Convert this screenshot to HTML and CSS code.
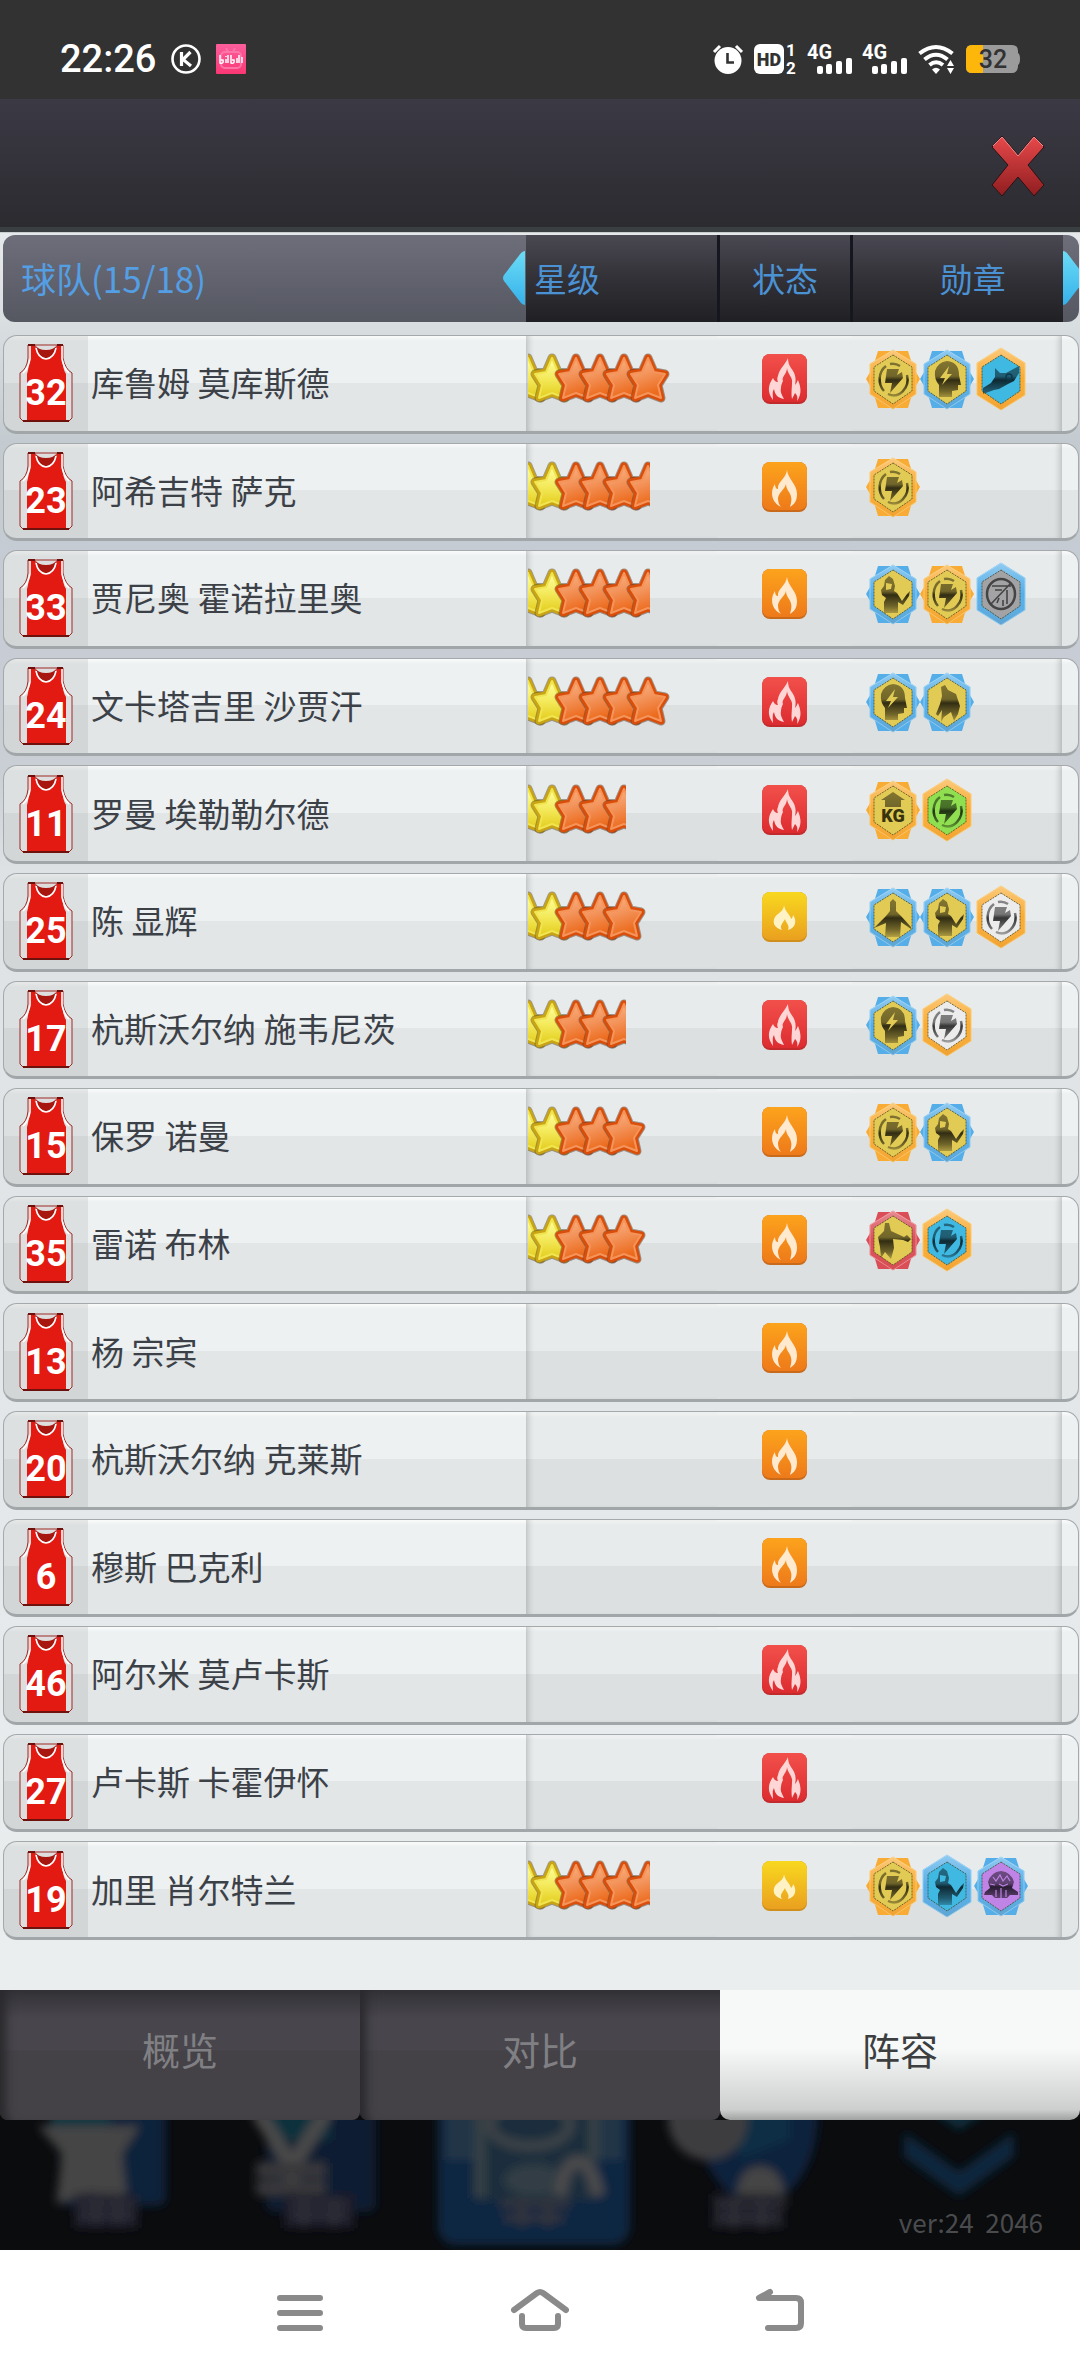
FILE: index.html
```html
<!DOCTYPE html>
<html lang="zh-CN">
<head>
    <meta charset="UTF-8">
    <meta name="viewport" content="width=device-width, initial-scale=1.0">
    <title>阵容</title>
    <link rel="stylesheet" href="styles.css">
</head>
<body>
    <!-- shared shapes -->
    <svg class="defs" aria-hidden="true">
        <defs>
            <linearGradient id="gold-star" x1="0" y1="0" x2="0" y2="1">
                <stop offset="0" stop-color="#ffffa4"/>
                <stop offset="0.5" stop-color="#f4ea5c"/>
                <stop offset="1" stop-color="#e3cc1c"/>
            </linearGradient>
            <linearGradient id="orange-star" x1="0" y1="0" x2="0.3" y2="1">
                <stop offset="0" stop-color="#f8ba90"/>
                <stop offset="0.5" stop-color="#f3935a"/>
                <stop offset="1" stop-color="#ec6a1c"/>
            </linearGradient>
            <linearGradient id="red-tile" x1="0" y1="0" x2="0" y2="1">
                <stop offset="0" stop-color="#f2504b"/>
                <stop offset="1" stop-color="#dd2c30"/>
            </linearGradient>
            <linearGradient id="orange-tile" x1="0" y1="0" x2="0" y2="1">
                <stop offset="0" stop-color="#fca31c"/>
                <stop offset="1" stop-color="#ee7a1a"/>
            </linearGradient>
            <linearGradient id="yellow-tile" x1="0" y1="0" x2="0" y2="1">
                <stop offset="0" stop-color="#f8d81f"/>
                <stop offset="1" stop-color="#eaa01f"/>
            </linearGradient>
            <linearGradient id="shine" x1="0" y1="0" x2="0" y2="1">
                <stop offset="0" stop-color="#fff" stop-opacity="0.35"/>
                <stop offset="0.5" stop-color="#fff" stop-opacity="0"/>
                <stop offset="1" stop-color="#a04000" stop-opacity="0.1"/>
            </linearGradient>
            <linearGradient id="ink" gradientUnits="userSpaceOnUse" x1="0" y1="14" x2="0" y2="52">
                <stop offset="0" stop-opacity="0.42"/>
                <stop offset="0.4" stop-opacity="0.5"/>
                <stop offset="0.5" stop-opacity="0.78"/>
                <stop offset="0.8" stop-opacity="0.5"/>
                <stop offset="1" stop-opacity="0.2"/>
            </linearGradient>
            <linearGradient id="cross-red" x1="0" y1="0" x2="0" y2="1">
                <stop offset="0" stop-color="#e8494b"/>
                <stop offset="1" stop-color="#8f1d1f"/>
            </linearGradient>
            <linearGradient id="arrow-blue" x1="0" y1="0" x2="0" y2="1">
                <stop offset="0" stop-color="#6cdcf6"/>
                <stop offset="1" stop-color="#35b1ea"/>
            </linearGradient>
            <linearGradient id="pink" x1="0" y1="0" x2="0" y2="1">
                <stop offset="0" stop-color="#fb5f9c"/>
                <stop offset="1" stop-color="#fb3775"/>
            </linearGradient>
            <filter id="soft" x="-10%" y="-10%" width="120%" height="120%"><feGaussianBlur stdDeviation="5"/></filter>
            <path id="star" d="M0 6 L6 20 L17 22 L10 33 L13 46 L0 41 L-13 46 L-10 33 L-17 22 L-6 20Z" stroke-linejoin="round"/>
            <g id="star-y">
                <use href="#star" fill="#6a5a20" stroke="#5a4a20" stroke-opacity="0.5" stroke-width="9"/>
                <use href="#star" fill="url(#gold-star)" stroke="#c9a414" stroke-width="7"/>
                <use href="#star" fill="url(#gold-star)" stroke="#f0e450" stroke-width="2"/>
            </g>
            <g id="star-o">
                <use href="#star" fill="#6a3a20" stroke="#5a3a28" stroke-opacity="0.5" stroke-width="9"/>
                <use href="#star" fill="url(#orange-star)" stroke="#d94e0a" stroke-width="7"/>
                <use href="#star" fill="url(#orange-star)" stroke="#f4945a" stroke-width="2"/>
            </g>
        </defs>

        <symbol id="stars5" overflow="visible">
            <use href="#star-y"/><use href="#star-y" x="24"/><use href="#star-o" x="48"/><use href="#star-o" x="72"/><use href="#star-o" x="96"/>
        </symbol>
        <symbol id="stars6" overflow="visible">
            <use href="#stars5"/><use href="#star-o" x="120"/>
        </symbol>

        <symbol id="jersey" viewBox="0 0 54 78">
            <path d="M9 1H44V14Q46 25 53 29V74L50 77H4L1 74V29Q8 25 9 14Z" fill="#dedede" stroke="#9d2a25" stroke-width="1"/>
            <path d="M10 1H16Q18 14 27 14Q36 14 38 1H44V14Q43 24 47 30V77H8V30Q10 24 10 14Z" fill="#e31a12"/>
            <path d="M16 1Q19 6 27 6Q35 6 38 1Q36 14 27 15Q18 14 16 1Z" fill="#a81610"/>
            <path d="M17 4Q19 14 27 15Q35 14 37 4M11 2V15Q9 25 4 29M43 2V15Q45 25 50 29" fill="none" stroke="#fff" stroke-width="1.6"/>
            <path d="M9 1H16M38 1H44M4 77H50" stroke="#6e110c" stroke-width="2"/>
        </symbol>

        <symbol id="fire-red" viewBox="0 0 45 50">
            <rect width="45" height="50" rx="8" fill="#c22a2c"/>
            <rect width="45" height="48" rx="8" fill="url(#red-tile)"/>
            <path d="M26 4C23 11 17 15 16 22C15 24 15 26 16 28C13 28 12 26 11 24C6 31 5 38 11 46C11 41 10 38 12 35C13 41 16 44 22 45C20 41 18 38 19 34C19 31 20 29 21 27C19 23 25 20 25 14C26 21 31 23 30 29C30 34 29 38 30 45C31 43 32 41 33 39C35 41 36 43 35 47C40 40 39 33 36 26C35 27 35 29 33 31C35 23 32 18 29 14C27 11 26 8 26 4Z" fill="#ffd6d6"/>
        </symbol>
        <symbol id="fire-orange" viewBox="0 0 45 50">
            <rect width="45" height="50" rx="8" fill="#c9691a"/>
            <rect width="45" height="48" rx="8" fill="url(#orange-tile)"/>
            <path d="M25 8C26 17 35 22 35 32C35 38 33 42 28 45C30 38 30 35 27 30C25 27 24 25 24 22C23 27 17 30 16 36C16 40 17 43 19 45C13 42 10 37 10 31C10 28 11 25 13 22C13 25 14 27 16 27C15 20 24 17 25 8Z" fill="#ffe9cf"/>
        </symbol>
        <symbol id="fire-yellow" viewBox="0 0 45 50">
            <rect width="45" height="50" rx="8" fill="#cf8f1a"/>
            <rect width="45" height="48" rx="8" fill="url(#yellow-tile)"/>
            <path d="M22 13C23 20 28 22 29 27C30 26 31 25 31 23C35 28 34 36 26 38C28 33 24 31 23 27C21 31 17 34 20 38C12 36 10 30 13 25C16 21 22 19 22 13Z" fill="#fff2c4"/>
        </symbol>

        <symbol id="burst" viewBox="0 0 54 64">
            <path class="frame" d="M0 32L7 20L12 4H42L47 20L54 32L47 44L42 61H12L7 44Z"/>
            <path class="frame edge" d="M27 3L50 17V47L27 62L4 47V17Z"/>
            <path d="M27 3L50 17V47L27 62L4 47V17Z" fill="url(#shine)"/>
            <path class="core" d="M27 8L46 20V44L27 57L8 44V20Z"/>
        </symbol>
        <symbol id="hexa" viewBox="0 0 54 64">
            <path class="frame edge" d="M27 1L51 16V48L27 63L3 48V16Z"/>
            <path d="M27 1L51 16V48L27 63L3 48V16Z" fill="url(#shine)"/>
            <path class="core" d="M27 8L46 20V44L27 57L8 44V20Z"/>
        </symbol>

        <symbol id="bolt" viewBox="0 0 54 64">
            <path d="M18 44A14 16 0 0 1 20 19M24 17A14 16 0 0 1 34 19M41 28A14 16 0 0 1 22 47" fill="none" stroke="url(#ink)" stroke-width="2.5"/>
            <path d="M21 22H33L31 28L36 25L37 31L24 46L26 36H19Z" fill="url(#ink)"/>
        </symbol>
        <symbol id="head" viewBox="0 0 54 64">
            <path d="M19 50V38Q14 32 15 24Q18 15 27 14Q39 15 39 28L41 38H38L38 43L32 44V50Z" fill="url(#ink)"/>
            <path class="ray" d="M29 19L20 31L25 31L22 38L32 27H27Z"/>
        </symbol>
        <symbol id="hand" viewBox="0 0 54 64">
            <path d="M9 47V41L17 36L21 30L21 21L26 26L32 26L45 19V26L40 34L34 37L25 42L20 43Z" fill="url(#ink)"/>
            <circle cx="35" cy="30" r="3" fill="none" stroke="#0a3a50" stroke-width="1.5"/>
        </symbol>
        <symbol id="pass" viewBox="0 0 54 64">
            <path d="M18 51V40L20 36L16 33L15 28L18 24L19 18L23 14L27 17L29 24L28 29L31 31L36 39L41 32L44 29L43 34L37 43L32 40V51Z" fill="url(#ink)"/>
            <path class="ray" d="M20 21L26 22L25 27L20 28Z"/>
        </symbol>
        <symbol id="stoop" viewBox="0 0 54 64">
            <path d="M21 17L25 15L28 20L36 24L40 36L38 44L34 51L31 42L24 47L21 52L22 40L18 46L16 44L20 34L22 26Z" fill="url(#ink)"/>
        </symbol>
        <symbol id="weight" viewBox="0 0 54 64">
            <path d="M27 14L39 22H35V29H19V22H15Z" fill="url(#ink)"/>
        </symbol>
        <symbol id="wide" viewBox="0 0 54 64">
            <path d="M8 43L20 31L24 26L24 17L27 14L30 17L30 26L35 31L45 42V44L35 37L34 52H19L20 38Z" fill="url(#ink)"/>
        </symbol>
        <symbol id="dribble" viewBox="0 0 54 64">
            <path d="M12 29L18 23L19 15L23 15L25 23L38 29L41 27L45 31L42 34L37 32L27 31L28 40L25 51L19 44L15 50L14 39Z" fill="url(#ink)"/>
        </symbol>
        <symbol id="drop" viewBox="0 0 54 64">
            <ellipse cx="27" cy="32" rx="14" ry="15" fill="none" stroke="#444" stroke-width="2.5"/>
            <path d="M18 24H37M21 28L28 28M33 28V42M16 43L37 21M25 36L23 41M29 38V44" fill="none" stroke="#444" stroke-width="1.6"/>
        </symbol>
        <symbol id="brain" viewBox="0 0 54 64">
            <path d="M11 38L16 34L14 28Q17 18 27 17Q37 18 40 28L38 34L44 38V41H36L33 44H21L18 41H10Z" fill="url(#ink)"/>
            <path d="M19 23L22 27L26 21L29 27L33 22L36 27M16 30L21 31M25 30L29 32L34 30M27 34V44M22 36V43M32 36V43" fill="none" stroke="#bf84e6" stroke-width="1.2"/>
        </symbol>

        <symbol id="signal" viewBox="0 0 44 30">
            <rect x="9" y="22" width="6" height="8" rx="2"/>
            <rect x="18" y="20" width="6" height="10" rx="2"/>
            <rect x="28" y="17" width="6" height="13" rx="2"/>
            <rect x="38" y="14" width="6" height="16" rx="2"/>
        </symbol>
    </svg>

    <div class="status-bar">
        <span class="clock">22:26</span>
        <svg class="app-icon" width="30" height="30" viewBox="0 0 30 30">
            <circle cx="15" cy="15" r="13.5" fill="none" stroke="#fff" stroke-width="2.6"/>
            <path d="M10.500 8V22M19.500 8L12 15.500L20 22" fill="none" stroke="#fff" stroke-width="3.200"/>
        </svg>
        <svg class="app-icon" width="30" height="30" viewBox="0 0 30 30">
            <rect width="30" height="30" rx="1" fill="url(#pink)"/>
            <path d="M10 4L12 8M19 4L17 8" stroke="#fd75a8" stroke-width="2"/>
            <rect x="5" y="8" width="20" height="16" rx="4" fill="none" stroke="#fd75a8" stroke-width="2"/>
            <path d="M4 11V19Q8 20 7 16H5M10 15V19M12 11V19M15 11V19Q19 20 18 16H16M21 14V19M23 11V19M26 13V19M10 12V13" fill="none" stroke="#fff" stroke-width="1.500"/>
        </svg>
        <div class="status-right">
            <svg width="30" height="30" viewBox="0 0 30 30">
                <circle cx="15" cy="16.500" r="13.500" fill="#fff"/>
                <path d="M1 8L7 2M29 8L23 2" stroke="#fff" stroke-width="3"/>
                <path d="M14.500 9V18.500H21" fill="none" stroke="#323232" stroke-width="2.600"/>
            </svg>
            <svg width="43" height="30" viewBox="0 0 43 30">
                <rect width="30" height="30" rx="6" fill="#fff"/>
                <text class="hd" x="15" y="22" text-anchor="middle">HD</text>
                <text class="sim" x="37" y="12" text-anchor="middle">1</text>
                <text class="sim" x="37" y="30" text-anchor="middle">2</text>
            </svg>
            <svg width="44" height="30" fill="#fff"><use href="#signal"/><text class="net" x="-1" y="15">4G</text></svg>
            <svg width="44" height="30" fill="#fff"><use href="#signal"/><text class="net" x="-1" y="15">4G</text></svg>
            <svg width="37" height="30" viewBox="0 0 37 30" fill="none" stroke="#fff" stroke-width="4">
                <path d="M1.500 9.500Q18 -3.500 34.500 9.500M6.500 15.500Q18 6 29.500 15.500M11.500 21Q18 15.500 25 21"/>
                <path d="M14 25.500Q18 22 22 25.500L18 30Z" fill="#fff" stroke="none"/>
                <path d="M29 22L32.500 16L36 22ZM29 24L32.500 30L36 24Z" fill="#fff" stroke="none"/>
            </svg>
            <svg width="54" height="28" viewBox="0 0 54 28">
                <path d="M6 0H46Q52 0 52 6V8Q54 9 54 14Q54 19 52 20V22Q51 28 46 28H6Q0 28 0 22V6Q0 0 6 0Z" fill="#9b9b9b"/>
                <path d="M6 0H17V28H6Q0 28 0 22V6Q0 0 6 0Z" fill="#fdb70a"/>
                <text class="charge" x="27" y="23" text-anchor="middle">32</text>
            </svg>
        </div>
    </div>

    <header class="title-bar">
        <button class="close" aria-label="关闭">
            <svg width="56" height="64" viewBox="0 0 56 64">
                <path d="M12 2L28 21L44 2L54 13L38 31L54 51L44 62L28 43L12 62L2 51L18 31L2 13Z" fill="url(#cross-red)" stroke="#241417" stroke-width="1"/>
                <path d="M3 12L12 3L28 22L44 3L53 12" fill="none" stroke="#f08a8a" stroke-width="1"/>
            </svg>
        </button>
    </header>

    <main class="panel">
        <table class="roster">
            <thead>
                <tr>
                    <th class="team" colspan="2">球队(15/18)
                        <svg class="arrow-left" width="22" height="56" viewBox="0 0 22 56"><path d="M22 1V55Q20 55 18 53L1 31Q-1 28 1 25L18 3Q20 1 22 1Z" fill="url(#arrow-blue)"/></svg>
                    </th>
                    <th class="rating">星级</th>
                    <th class="form">状态</th>
                    <th class="badges">勋章</th>
                    <th class="more" aria-label="更多">
                        <svg class="arrow-right" width="20" height="56" viewBox="0 0 20 56"><path d="M0 1V55Q2 55 4 53L20 32V24L4 3Q2 1 0 1Z" fill="url(#arrow-blue)"/></svg>
                    </th>
                </tr>
            </thead>
            <tbody>
                <tr>
                    <td class="number"><span class="shirt"><svg><use href="#jersey"/></svg><b>32</b></span></td>
                    <td class="name">库鲁姆 莫库斯德</td>
                    <td class="rating"><svg class="stars full6"><use href="#stars6"/></svg></td>
                    <td class="form"><svg class="fire"><use href="#fire-red"/></svg></td>
                    <td class="badges">
                        <svg class="medal gold yellow"><use href="#burst"/><use href="#bolt"/></svg>
                        <svg class="medal blue yellow"><use href="#burst"/><use href="#head"/></svg>
                        <svg class="medal gold cyan"><use href="#hexa"/><use href="#hand"/></svg>
                    </td>
                </tr>
                <tr>
                    <td class="number"><span class="shirt"><svg><use href="#jersey"/></svg><b>23</b></span></td>
                    <td class="name">阿希吉特 萨克</td>
                    <td class="rating"><svg class="stars half6"><use href="#stars6"/></svg></td>
                    <td class="form"><svg class="fire"><use href="#fire-orange"/></svg></td>
                    <td class="badges">
                        <svg class="medal gold yellow"><use href="#burst"/><use href="#bolt"/></svg>
                    </td>
                </tr>
                <tr>
                    <td class="number"><span class="shirt"><svg><use href="#jersey"/></svg><b>33</b></span></td>
                    <td class="name">贾尼奥 霍诺拉里奥</td>
                    <td class="rating"><svg class="stars half6"><use href="#stars6"/></svg></td>
                    <td class="form"><svg class="fire"><use href="#fire-orange"/></svg></td>
                    <td class="badges">
                        <svg class="medal blue yellow"><use href="#burst"/><use href="#pass"/></svg>
                        <svg class="medal gold yellow"><use href="#burst"/><use href="#bolt"/></svg>
                        <svg class="medal blue gray"><use href="#hexa"/><use href="#drop"/></svg>
                    </td>
                </tr>
                <tr>
                    <td class="number"><span class="shirt"><svg><use href="#jersey"/></svg><b>24</b></span></td>
                    <td class="name">文卡塔吉里 沙贾汗</td>
                    <td class="rating"><svg class="stars full6"><use href="#stars6"/></svg></td>
                    <td class="form"><svg class="fire"><use href="#fire-red"/></svg></td>
                    <td class="badges">
                        <svg class="medal blue yellow"><use href="#burst"/><use href="#head"/></svg>
                        <svg class="medal blue yellow"><use href="#burst"/><use href="#stoop"/></svg>
                    </td>
                </tr>
                <tr>
                    <td class="number"><span class="shirt"><svg><use href="#jersey"/></svg><b>11</b></span></td>
                    <td class="name">罗曼 埃勒勒尔德</td>
                    <td class="rating"><svg class="stars half5"><use href="#stars5"/></svg></td>
                    <td class="form"><svg class="fire"><use href="#fire-red"/></svg></td>
                    <td class="badges">
                        <svg class="medal gold yellow"><use href="#burst"/><use href="#weight"/><text class="kg" x="27" y="44" text-anchor="middle">KG</text></svg>
                        <svg class="medal gold green"><use href="#hexa"/><use href="#bolt"/></svg>
                    </td>
                </tr>
                <tr>
                    <td class="number"><span class="shirt"><svg><use href="#jersey"/></svg><b>25</b></span></td>
                    <td class="name">陈 显辉</td>
                    <td class="rating"><svg class="stars full5"><use href="#stars5"/></svg></td>
                    <td class="form"><svg class="fire"><use href="#fire-yellow"/></svg></td>
                    <td class="badges">
                        <svg class="medal blue yellow"><use href="#burst"/><use href="#wide"/></svg>
                        <svg class="medal blue yellow"><use href="#burst"/><use href="#pass"/></svg>
                        <svg class="medal gold white"><use href="#hexa"/><use href="#bolt"/></svg>
                    </td>
                </tr>
                <tr>
                    <td class="number"><span class="shirt"><svg><use href="#jersey"/></svg><b>17</b></span></td>
                    <td class="name">杭斯沃尔纳 施韦尼茨</td>
                    <td class="rating"><svg class="stars half5"><use href="#stars5"/></svg></td>
                    <td class="form"><svg class="fire"><use href="#fire-red"/></svg></td>
                    <td class="badges">
                        <svg class="medal blue yellow"><use href="#burst"/><use href="#head"/></svg>
                        <svg class="medal gold white"><use href="#hexa"/><use href="#bolt"/></svg>
                    </td>
                </tr>
                <tr>
                    <td class="number"><span class="shirt"><svg><use href="#jersey"/></svg><b>15</b></span></td>
                    <td class="name">保罗 诺曼</td>
                    <td class="rating"><svg class="stars full5"><use href="#stars5"/></svg></td>
                    <td class="form"><svg class="fire"><use href="#fire-orange"/></svg></td>
                    <td class="badges">
                        <svg class="medal gold yellow"><use href="#burst"/><use href="#bolt"/></svg>
                        <svg class="medal blue yellow"><use href="#burst"/><use href="#pass"/></svg>
                    </td>
                </tr>
                <tr>
                    <td class="number"><span class="shirt"><svg><use href="#jersey"/></svg><b>35</b></span></td>
                    <td class="name">雷诺 布林</td>
                    <td class="rating"><svg class="stars full5"><use href="#stars5"/></svg></td>
                    <td class="form"><svg class="fire"><use href="#fire-orange"/></svg></td>
                    <td class="badges">
                        <svg class="medal red yellow"><use href="#burst"/><use href="#dribble"/></svg>
                        <svg class="medal gold cyan"><use href="#hexa"/><use href="#bolt"/></svg>
                    </td>
                </tr>
                <tr>
                    <td class="number"><span class="shirt"><svg><use href="#jersey"/></svg><b>13</b></span></td>
                    <td class="name">杨 宗宾</td>
                    <td class="rating"></td>
                    <td class="form"><svg class="fire"><use href="#fire-orange"/></svg></td>
                    <td class="badges"></td>
                </tr>
                <tr>
                    <td class="number"><span class="shirt"><svg><use href="#jersey"/></svg><b>20</b></span></td>
                    <td class="name">杭斯沃尔纳 克莱斯</td>
                    <td class="rating"></td>
                    <td class="form"><svg class="fire"><use href="#fire-orange"/></svg></td>
                    <td class="badges"></td>
                </tr>
                <tr>
                    <td class="number"><span class="shirt"><svg><use href="#jersey"/></svg><b>6</b></span></td>
                    <td class="name">穆斯 巴克利</td>
                    <td class="rating"></td>
                    <td class="form"><svg class="fire"><use href="#fire-orange"/></svg></td>
                    <td class="badges"></td>
                </tr>
                <tr>
                    <td class="number"><span class="shirt"><svg><use href="#jersey"/></svg><b>46</b></span></td>
                    <td class="name">阿尔米 莫卢卡斯</td>
                    <td class="rating"></td>
                    <td class="form"><svg class="fire"><use href="#fire-red"/></svg></td>
                    <td class="badges"></td>
                </tr>
                <tr>
                    <td class="number"><span class="shirt"><svg><use href="#jersey"/></svg><b>27</b></span></td>
                    <td class="name">卢卡斯 卡霍伊怀</td>
                    <td class="rating"></td>
                    <td class="form"><svg class="fire"><use href="#fire-red"/></svg></td>
                    <td class="badges"></td>
                </tr>
                <tr>
                    <td class="number"><span class="shirt"><svg><use href="#jersey"/></svg><b>19</b></span></td>
                    <td class="name">加里 肖尔特兰</td>
                    <td class="rating"><svg class="stars half6"><use href="#stars6"/></svg></td>
                    <td class="form"><svg class="fire"><use href="#fire-yellow"/></svg></td>
                    <td class="badges">
                        <svg class="medal gold yellow"><use href="#burst"/><use href="#bolt"/></svg>
                        <svg class="medal blue cyan"><use href="#hexa"/><use href="#pass"/></svg>
                        <svg class="medal blue purple"><use href="#burst"/><use href="#brain"/></svg>
                    </td>
                </tr>
            </tbody>
        </table>
    </main>

    <nav class="tabs">
        <button class="tab">概览</button>
        <button class="tab">对比</button>
        <button class="tab active">阵容</button>
    </nav>

    <footer class="dock">
        <svg class="dock-art" viewBox="0 0 1080 131" preserveAspectRatio="xMidYMin slice" aria-hidden="true">
            <g filter="url(#soft)">
                <rect x="60" y="-20" width="106" height="106" rx="8" fill="#09203a"/>
                <rect x="50" y="-10" width="60" height="30" fill="#103440"/>
                <path d="M38 6H140L122 34L128 84L92 72L56 84L62 34Z" fill="#444"/>
                <rect x="74" y="74" width="64" height="34" fill="#1c1e29"/>
                <path d="M78 84H134M78 96H134M96 78V104M118 78V104" stroke="#30313a" stroke-width="5"/>
                <rect x="266" y="-20" width="110" height="112" rx="8" fill="#0a1c30"/>
                <rect x="270" y="-20" width="60" height="40" fill="#0e303c"/>
                <path d="M258 -8L292 46L326 -8M292 40V80" fill="none" stroke="#484848" stroke-width="15"/>
                <path d="M256 50H326M256 68H326" stroke="#38393b" stroke-width="15"/>
                <rect x="284" y="74" width="70" height="34" fill="#1c1e29"/>
                <path d="M290 84H348M290 96H348M304 78V106M334 78V106" stroke="#30313a" stroke-width="5"/>
                <rect x="438" y="-30" width="192" height="155" rx="18" fill="#0a2542"/>
                <path d="M446 -10H622V40H446Z" fill="#243446"/>
                <rect x="474" y="-20" width="122" height="100" rx="10" fill="#1a2e3c"/>
                <path d="M480 -10V78M594 -10V40" stroke="#363f44" stroke-width="12"/>
                <ellipse cx="530" cy="4" rx="40" ry="22" fill="none" stroke="#3c4246" stroke-width="10"/>
                <ellipse cx="534" cy="60" rx="30" ry="16" fill="#303c44"/>
                <path d="M560 76Q564 42 578 42Q592 42 598 76" fill="none" stroke="#484a4c" stroke-width="14"/>
                <path d="M500 84H570M504 98H564M522 78V106M548 78V106" stroke="#36363c" stroke-width="7"/>
                <path d="M690 -10H818Q818 70 756 90Q704 70 690 -10Z" fill="#0b203c"/>
                <path d="M730 -10H790V20L740 40Z" fill="#0d2e44"/>
                <circle cx="708" cy="0" r="40" fill="#3c3d3f"/>
                <path d="M736 86Q736 46 760 46Q784 46 786 86" fill="#444"/>
                <rect x="712" y="74" width="72" height="34" fill="#1a1c25"/>
                <path d="M716 84H780M716 98H780M734 78V108M762 78V108" stroke="#30313a" stroke-width="5"/>
                <path d="M906 16L959 54L1012 16V36L959 74L906 36Z" fill="#0c283c" stroke="#0c283c" stroke-width="4"/>
                <path d="M930 -10H988L959 10Z" fill="#0d2e3c"/>
            </g>
        </svg>
        <p class="version">ver:24&nbsp; 2046</p>
    </footer>

    <div class="system-nav">
        <button aria-label="最近任务">
            <svg width="46" height="50" viewBox="0 0 46 50"><path d="M3 10H43M3 25H43M3 40H43"/></svg>
        </button>
        <button aria-label="主页">
            <svg width="58" height="50" viewBox="0 0 58 50"><path d="M3 22L26 5Q29 3 32 5L55 22M11 28V36Q11 40 15 40H43Q47 40 47 36V28"/></svg>
        </button>
        <button aria-label="返回">
            <svg width="50" height="50" viewBox="0 0 50 50"><path d="M15 4L4 10H41Q46 10 46 15V35Q46 40 41 40H13"/></svg>
        </button>
    </div>
</body>
</html>
```
FILE: styles.css
```css
* {
    box-sizing: border-box;
}

body {
    display: flex;
    flex-direction: column;
    min-height: 100vh;
    margin: 0;
    background: #0b0c0e;
    font-family: 'Noto Sans CJK SC', sans-serif;
}

button {
    border: none;
    padding: 0;
    background: none;
    font-family: inherit;
    cursor: pointer;
}

svg {
    display: block;
    flex-shrink: 0;
}

.defs {
    position: absolute;
    width: 0;
    height: 0;
}

/* phone status bar */
.status-bar {
    display: flex;
    align-items: center;
    height: 99px;
    padding: 18px 60px 0;
    background: #323232;
    color: #fff;
}

.clock {
    font: 500 38px/40px Roboto, sans-serif;
}

.app-icon {
    margin-left: 15px;
}

.status-right {
    display: flex;
    align-items: center;
    gap: 11px;
    margin-left: auto;
}

.status-right svg {
    overflow: visible;
}

.net,
.sim,
.hd,
.charge {
    font-family: Roboto, sans-serif;
    font-weight: 700;
}

.net {
    font-size: 20px;
}

.sim {
    font-size: 17px;
    fill: #fff;
}

.hd {
    font-size: 18px;
    font-weight: 900;
    fill: #323232;
}

.charge {
    font-size: 25px;
    font-weight: 500;
    fill: #323232;
}

/* title bar */
.title-bar {
    display: flex;
    align-items: center;
    justify-content: flex-end;
    height: 133px;
    padding: 6px 34px 0 0;
    border-bottom: 5px solid #3a4042;
    background: linear-gradient(#3b3944, #2c2b30);
}

/* roster */
.panel {
    display: flex;
    flex: 1;
    padding: 2px 1px 50px 3px;
    border-top: 1px solid #c9cdce;
    background: linear-gradient(#e6e9eb 0, #d9dee1 90px, #c4cbd0 210px, #c7ccd5 420px, #cacfd5 540px, #dfe2e4 640px, #e4e7e9 1200px, #eaeeef 1720px);
}

.roster {
    display: flex;
    flex: 1;
    flex-direction: column;
    gap: 13px;
}

.roster tr {
    display: grid;
    grid-template-columns: 84px 438fr 191fr 135fr 210fr 16px;
    overflow: hidden;
    border-radius: 12px;
}

.roster th,
.roster td {
    display: flex;
    align-items: center;
    padding: 0;
}

.roster thead tr {
    height: 87px;
    background: linear-gradient(#6d6e7a, #555761);
}

.roster th {
    justify-content: center;
    padding-bottom: 2px;
    background: linear-gradient(#4a4852, #323137 50%, #202024);
    color: #4b92d4;
    font-size: 33px;
    font-weight: 400;
    line-height: 48px;
}

.roster th.team {
    grid-column: span 2;
    justify-content: space-between;
    padding: 0 1px 2px 18px;
    background: none;
    color: #549ee4;
    font-size: 35px;
}

.roster th.rating {
    justify-content: flex-start;
    padding-left: 8px;
}

.roster th.form {
    border: solid #15161f;
    border-width: 0 3px;
}

.roster th.badges {
    padding-left: 30px;
}

.roster th.more {
    justify-content: flex-start;
    background: none;
}

.roster tbody {
    display: grid;
    flex: 1;
    grid-auto-rows: 1fr;
    gap: 9px;
}

.roster tbody tr {
    min-height: 96px;
    border: 1px solid #a4a9ac;
    border-bottom: 3px solid #a1a6a8;
    border-radius: 14px;
    background: linear-gradient(#fafbfb 0, #edf1f2 5px, #edf1f2 49%, #e2e6e7 49%, #e2e6e7 100%);
}

.number {
    background: rgba(60, 60, 60, 0.09);
}

.roster td.number {
    padding-left: 15px;
}

.shirt {
    display: grid;
    width: 54px;
    height: 78px;
}

.shirt svg,
.shirt b {
    grid-area: 1 / 1;
    width: 54px;
    height: 78px;
}

.shirt b {
    padding-top: 20px;
    color: #fff;
    font: 700 36px/58px Roboto, sans-serif;
    text-align: center;
}

.roster .name {
    padding: 0 0 2px 3px;
    color: #3c4148;
    font-size: 33px;
    line-height: 48px;
}

.roster td.rating,
.roster td.form,
.roster td.badges {
    padding-bottom: 8px;
    background: rgba(70, 75, 70, 0.03);
}

.roster td.rating {
    padding-left: 2px;
    box-shadow: inset 6px 0 6px -4px rgba(0, 0, 0, 0.2);
}

.roster td.form {
    justify-content: center;
}

.roster td.badges {
    padding-left: 14px;
    box-shadow: inset -6px 0 6px -4px rgba(0, 0, 0, 0.2);
}

.stars {
    height: 54px;
}

.full6 {
    width: 144px;
}

.half6 {
    width: 122px;
}

.full5 {
    width: 120px;
}

.half5 {
    width: 98px;
}

.fire {
    width: 45px;
    height: 50px;
}

.medal {
    width: 54px;
    height: 64px;
}

.frame {
    fill: var(--frame);
}

.edge {
    stroke: var(--rim);
    stroke-width: 1;
}

.core {
    fill: var(--core);
    stroke: rgba(60, 60, 20, 0.7);
    stroke-width: 1;
    stroke-dasharray: 2 1;
}

.ray {
    fill: var(--core);
}

.kg {
    fill: #38330f;
    font: 900 18px Roboto, sans-serif;
}

.gold {
    --frame: #f9ac35;
    --rim: #fbc768;
}

.blue {
    --frame: #56aee8;
    --rim: #8accf5;
}

.red {
    --frame: #da4e58;
    --rim: #ec8d92;
}

.yellow {
    --core: #e2cb54;
}

.cyan {
    --core: #3fb8e2;
}

.green {
    --core: #8fdf50;
}

.white {
    --core: #ececec;
}

.gray {
    --core: #a3a3a6;
}

.purple {
    --core: #bf84e6;
}

/* tabs */
.tabs {
    display: grid;
    grid-template-columns: repeat(3, 1fr);
    height: 130px;
}

.tab {
    padding-bottom: 14px;
    border-radius: 0 0 8px 8px;
    background: linear-gradient(#323136, #48464c 28px, #48464c 46%, #444247 47%, #444247);
    box-shadow: inset 12px 0 10px -6px #2a292d;
    color: #808084;
    font-size: 38px;
}

.tab.active {
    border-radius: 0 0 10px 10px;
    background: linear-gradient(#f7f9f9 45%, #cccfce 92%, #9fa2a1);
    box-shadow: none;
    color: #3c3e40;
}

/* dimmed game menu behind the dialog */
.dock {
    display: flex;
    position: relative;
    align-items: flex-end;
    justify-content: flex-end;
    height: 130px;
    overflow: hidden;
}

.dock-art {
    position: absolute;
    inset: 0;
    width: 100%;
    height: 100%;
}

.version {
    position: relative;
    margin: 0;
    padding: 0 37px 10px 0;
    color: #4a4b4d;
    font-size: 26px;
    line-height: 36px;
}

/* android keys */
.system-nav {
    display: grid;
    grid-template-columns: 1fr 2fr 2fr 2fr 1fr;
    grid-template-columns: 3fr 4fr 4fr 4fr 3fr;
    height: 126px;
    background: #fff;
}

.system-nav button {
    display: flex;
    align-items: center;
    justify-content: center;
}

.system-nav button:first-child {
    grid-column: 2;
}

.system-nav svg {
    fill: none;
    stroke: #8a8a8a;
    stroke-width: 6;
    stroke-linecap: round;
    stroke-linejoin: round;
}
```
